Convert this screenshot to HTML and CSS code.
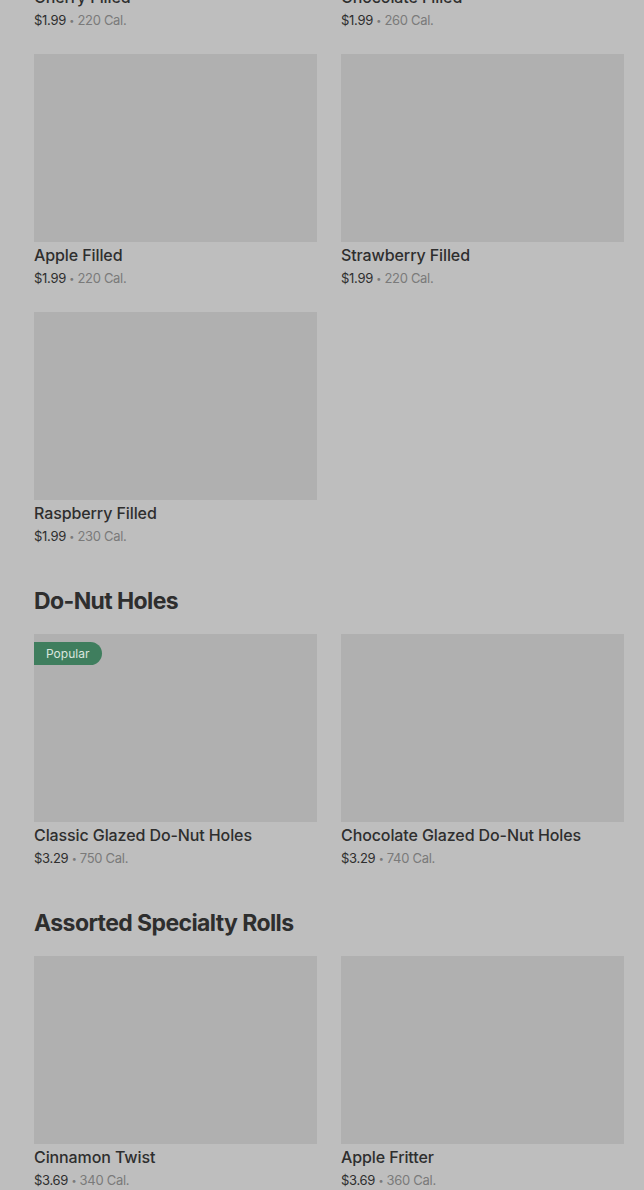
FILE: index.html
```html
<!DOCTYPE html>
<html>
<head>
<meta charset="utf-8">
<link rel="stylesheet" href="styles.css">
</head>
<body>
<div class="page">
  <section class="section first">
    <div class="grid">
      <div class="card"><div class="img"></div><div class="name">Cherry Filled</div><div class="meta"><span class="price">$1.99</span> <span class="dot">•</span> 220 Cal.</div></div>
      <div class="card"><div class="img"></div><div class="name">Chocolate Filled</div><div class="meta"><span class="price">$1.99</span> <span class="dot">•</span> 260 Cal.</div></div>
      <div class="card"><div class="img"></div><div class="name">Apple Filled</div><div class="meta"><span class="price">$1.99</span> <span class="dot">•</span> 220 Cal.</div></div>
      <div class="card"><div class="img"></div><div class="name">Strawberry Filled</div><div class="meta"><span class="price">$1.99</span> <span class="dot">•</span> 220 Cal.</div></div>
      <div class="card"><div class="img"></div><div class="name">Raspberry Filled</div><div class="meta"><span class="price">$1.99</span> <span class="dot">•</span> 230 Cal.</div></div>
    </div>
  </section>
  <section class="section">
    <h2 class="heading">Do-Nut Holes</h2>
    <div class="grid">
      <div class="card"><div class="img"><span class="badge">Popular</span></div><div class="name">Classic Glazed Do-Nut Holes</div><div class="meta"><span class="price">$3.29</span> <span class="dot">•</span> 750 Cal.</div></div>
      <div class="card"><div class="img"></div><div class="name">Chocolate Glazed Do-Nut Holes</div><div class="meta"><span class="price">$3.29</span> <span class="dot">•</span> 740 Cal.</div></div>
    </div>
  </section>
  <section class="section">
    <h2 class="heading">Assorted Specialty Rolls</h2>
    <div class="grid">
      <div class="card"><div class="img"></div><div class="name">Cinnamon Twist</div><div class="meta"><span class="price">$3.69</span> <span class="dot">•</span> 340 Cal.</div></div>
      <div class="card"><div class="img"></div><div class="name">Apple Fritter</div><div class="meta"><span class="price">$3.69</span> <span class="dot">•</span> 360 Cal.</div></div>
    </div>
  </section>
</div>
</body>
</html>
```
FILE: styles.css
```css
html, body {
  margin: 0;
  padding: 0;
  background: #bebebe;
  overflow: hidden;
}
body {
  font-family: Inter, "Noto Sans", sans-serif;
  color: #2e2e2e;
}
.page {
  padding: 0 20px 0 34px;
  margin-top: -204px;
}
.section {
  margin-bottom: 37px;
}
.heading {
  margin: 0 0 17px 0;
  font-size: 23px;
  line-height: 32px;
  font-weight: 700;
  letter-spacing: -0.6px;
  color: #2e2e2e;
}
.grid {
  display: grid;
  grid-template-columns: 283px 283px;
  column-gap: 24px;
  row-gap: 22px;
}
.card {
  display: flex;
  flex-direction: column;
}
.img {
  position: relative;
  height: 188px;
  background: #b0b0b0;
  margin-bottom: 2px;
}
.badge {
  position: absolute;
  left: 0;
  top: 8px;
  height: 23px;
  line-height: 23px;
  padding: 0 13px 0 12px;
  background: #3f7e5e;
  color: #dbe6df;
  font-size: 12px;
  border-radius: 0 12px 12px 0;
}
.name {
  font-size: 16px;
  line-height: 22px;
  height: 22px;
  font-weight: 500;
  color: #2e2e2e;
  letter-spacing: -0.1px;
}
.meta {
  font-size: 13px;
  line-height: 24px;
  height: 24px;
  overflow: hidden;
  color: #7a7a7a;
  letter-spacing: -0.3px;
}
.dot {
  font-size: 9px;
  line-height: 0;
  vertical-align: 1px;
}
.price {
  color: #2e2e2e;
}
```
